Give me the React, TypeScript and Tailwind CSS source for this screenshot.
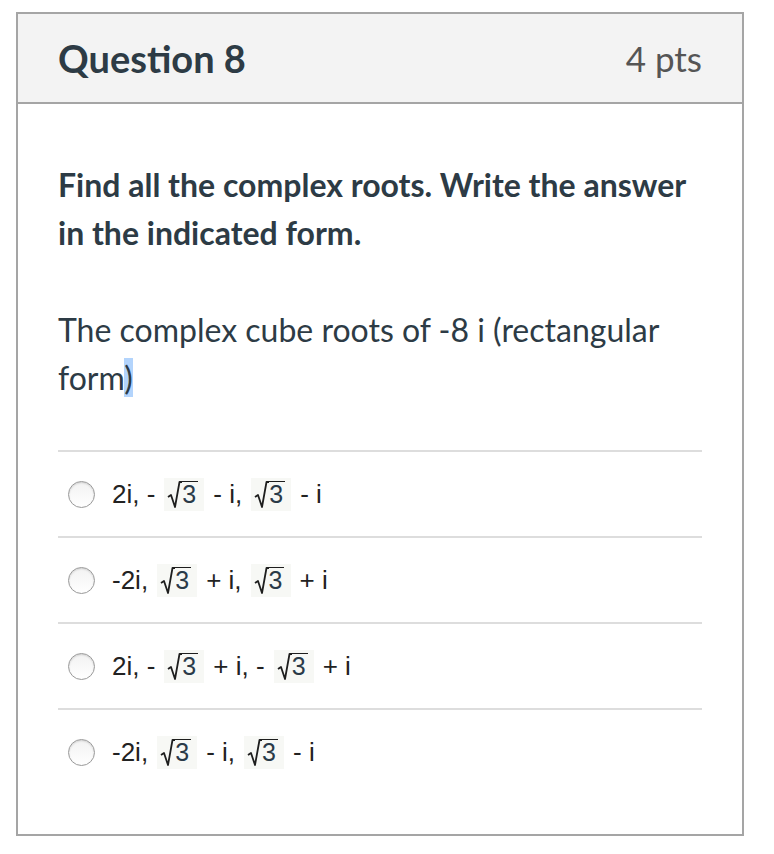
import React from "react";

function Sqrt3() {
  return (
    <span className="inline-flex items-start mx-[9px] w-[40px] h-[33px] bg-[#f7f8f5] pl-[3px]">
      <svg width="15" height="31" viewBox="0 0 15 31" className="block">
        <path d="M1 19 L4 17 L8 29 L12.5 4 L15 4" fill="none" stroke="#1e1e1e" strokeWidth="1.8" strokeLinejoin="round" />
      </svg>
      <span className="mt-[3px] border-t-[1.8px] border-[#1e1e1e] leading-[24px] text-[25px] pr-[2px] text-[#2a3a48]">
        3
      </span>
    </span>
  );
}

function Radio() {
  return (
    <span className="inline-block w-[27px] h-[27px] rounded-full border border-[#9a9a9a] bg-gradient-to-b from-[#f2f2f2] to-white shadow-[inset_0_1px_2px_rgba(0,0,0,0.15)] shrink-0" />
  );
}

function Row({ children }: { children: React.ReactNode }) {
  return (
    <div className="border-t-2 border-[#dddddd] h-[86px] flex items-center">
      <div className="ml-[10px] mr-[17px] flex items-center">
        <Radio />
      </div>
      <div className="text-[26px] text-[#222] whitespace-pre flex items-center" style={{ fontFamily: '"Liberation Sans", Arial, sans-serif' }}>
        {children}
      </div>
    </div>
  );
}

export default function App() {
  return (
    <div className="w-[774px] h-[854px] bg-white pt-[12px] pl-[16px]" style={{ fontFamily: 'Lato, "Open Sans", sans-serif' }}>
      <div className="w-[728px] h-[824px] border-2 border-[#a5a5a5] flex flex-col">
        <div className="h-[90px] bg-[#f3f3f3] border-b-2 border-[#a5a5a5] px-[40px] flex items-center justify-between">
          <div className="text-[38px] font-bold text-[#2d3b45] leading-none">Question 8</div>
          <div className="text-[35px] text-[#555555] leading-none">4 pts</div>
        </div>
        <div className="px-[40px] pt-[57px] text-[#2d3b45]">
          <p className="text-[32px] font-bold leading-[48px]">
            Find all the complex roots. Write the answer in the indicated form.
          </p>
          <p className="text-[32px] leading-[48px] mt-[49px]">
            The complex cube roots of -8 i (rectangular form<span className="bg-[#b3d4fc]">)</span>
          </p>
          <div className="mt-[48px]">
            <Row>
              2i, -<Sqrt3 />- i,<Sqrt3 />- i
            </Row>
            <Row>
              -2i,<Sqrt3 />+ i,<Sqrt3 />+ i
            </Row>
            <Row>
              2i, -<Sqrt3 />+ i, -<Sqrt3 />+ i
            </Row>
            <Row>
              -2i,<Sqrt3 />- i,<Sqrt3 />- i
            </Row>
          </div>
        </div>
      </div>
    </div>
  );
}
